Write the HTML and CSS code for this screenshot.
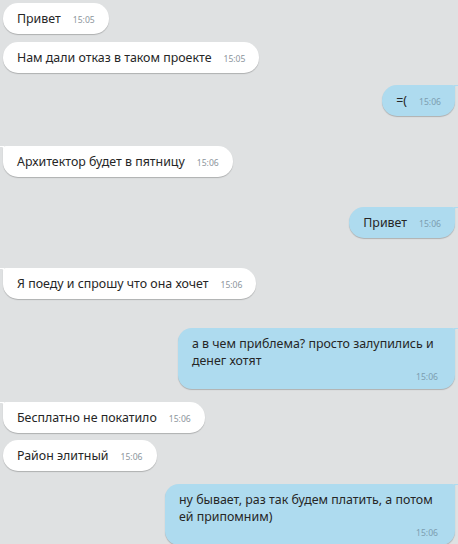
FILE: index.html
```html
<!doctype html>
<html lang="ru">
<head>
  <meta charset="utf-8">
  <title>Чат</title>
  <link rel="stylesheet" href="styles.css">
</head>
<body>
<div class="chat">
  <div class="row in"><div class="bubble">Привет<span class="time">15:05</span></div></div>
  <div class="row in gap-8"><div class="bubble">Нам дали отказ в таком проекте<span class="time">15:05</span></div></div>

  <div class="row out gap-12"><div class="bubble tail">=(<span class="time">15:06</span></div></div>

  <div class="row in gap-30"><div class="bubble tail">Архитектор будет в пятницу<span class="time">15:06</span></div></div>

  <div class="row out gap-30"><div class="bubble tail">Привет<span class="time">15:06</span></div></div>

  <div class="row in gap-30"><div class="bubble tail">Я поеду и спрошу что она хочет<span class="time">15:06</span></div></div>

  <div class="row out gap-29">
    <div class="bubble tail wide w277">
      <p>а в чем приблема? просто залупились и денег хотят</p>
      <span class="time">15:06</span>
    </div>
  </div>

  <div class="row in gap-13"><div class="bubble tail">Бесплатно не покатило<span class="time">15:06</span></div></div>
  <div class="row in gap-7"><div class="bubble">Район элитный<span class="time">15:06</span></div></div>

  <div class="row out gap-13">
    <div class="bubble tail wide w290">
      <p>ну бывает, раз так будем платить, а потом ей припомним)</p>
      <span class="time">15:06</span>
    </div>
  </div>
</div>
</body>
</html>
```

FILE: styles.css
```css
*{
  margin:0;
  padding:0;
  box-sizing:border-box;
}
body{
  background:#dfe1e2;
  font-family:"Noto Sans","Open Sans",sans-serif;
  font-size:12.4px;
  color:#262626;
}
.chat{
  display:flex;
  flex-direction:column;
  padding:3px 3px 0;
}
.row{
  display:flex;
}
.row.in{
  justify-content:flex-start;
}
.row.out{
  justify-content:flex-end;
}
.gap-7{ margin-top:7px; }
.gap-8{ margin-top:8px; }
.gap-12{ margin-top:12px; }
.gap-13{ margin-top:13px; }
.gap-29{ margin-top:29px; }
.gap-30{ margin-top:30px; }

.bubble{
  position:relative;
  background:#fff;
  border-radius:15px;
  padding:7px 14px;
  line-height:17px;
  height:31px;
  box-shadow:0 1px 1px rgba(0,0,0,.22);
  white-space:nowrap;
}
.out .bubble{
  background:#aedbef;
}
.time{
  font-size:8.6px;
  line-height:1;
  color:#8c959c;
  margin-left:12px;
}
.out .time{
  color:#7c9db0;
}

/* хвостик */
.in .bubble.tail{
  border-top-left-radius:3px;
}
.in .bubble.tail::before{
  content:"";
  position:absolute;
  left:-3px;
  top:0;
  width:4px;
  height:6px;
  background:radial-gradient(circle at 0 100%, transparent 5px, #fff 5.5px);
}
.out .bubble.tail{
  border-top-right-radius:3px;
}
.out .bubble.tail::before{
  content:"";
  position:absolute;
  right:-3px;
  top:0;
  width:4px;
  height:6px;
  background:radial-gradient(circle at 100% 100%, transparent 5px, #aedbef 5.5px);
}

.bubble.wide{
  white-space:normal;
  height:auto;
  padding:7px 17px 6px 14px;
  border-radius:14px;
}
.w277{ width:277px; }
.w290{ width:290px; }
.bubble.wide .time{
  display:block;
  text-align:right;
  margin-left:0;
  line-height:12px;
  margin-top:2px;
}
```
